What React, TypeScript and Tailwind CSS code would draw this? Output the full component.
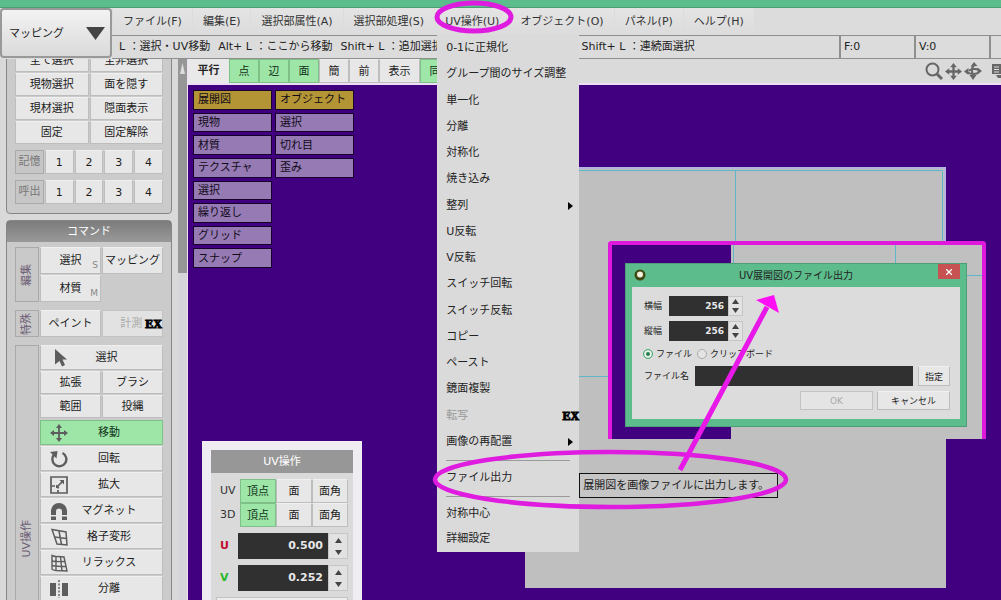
import { useState } from "react";
import type { ReactNode } from "react";

const BTN =
  "flex items-center justify-center border border-[#bdbdbd] border-t-[#f0f0f0] bg-[#e7e7e7] pt-px text-[#1c1c1c] whitespace-nowrap";
const BTN_ON =
  "flex items-center justify-center border border-[#7fbf88] bg-[#9de6a7] pt-px text-[#12331a] whitespace-nowrap";

const MENUS = [
  "ファイル(F)",
  "編集(E)",
  "選択部属性(A)",
  "選択部処理(S)",
  "UV操作(U)",
  "オブジェクト(O)",
  "パネル(P)",
  "ヘルプ(H)",
];

const UV_ITEMS = [
  { label: "0-1に正規化" },
  { label: "グループ間のサイズ調整" },
  { label: "単一化" },
  { label: "分離" },
  { label: "対称化" },
  { label: "焼き込み" },
  { label: "整列", sub: true },
  { label: "U反転" },
  { label: "V反転" },
  { label: "スイッチ回転" },
  { label: "スイッチ反転" },
  { label: "コピー" },
  { label: "ペースト" },
  { label: "鏡面複製" },
  { label: "転写", ex: true },
  { label: "画像の再配置", sub: true },
];

const OVERLAY = [
  "展開図", "現物", "材質", "テクスチャ", "選択", "繰り返し", "グリッド", "スナップ",
  "オブジェクト", "選択", "切れ目", "歪み",
];

function ExMark() {
  return (
    <span className="font-['Liberation_Serif',serif] text-[12px] font-black text-black [-webkit-text-stroke:1px_#000]">
      EX
    </span>
  );
}

function Arrows({ label }: { label: string }) {
  return (
    <div className="flex w-full flex-col border border-[#c6c6c6] bg-[#e2e2e2]">
      <button aria-label={`${label} +`} className="flex flex-1 items-center justify-center">
        <svg width="7" height="5" viewBox="0 0 7 5"><path d="M0 5L3.5 0L7 5z" fill="#444" /></svg>
      </button>
      <button aria-label={`${label} -`} className="flex flex-1 items-center justify-center">
        <svg width="7" height="5" viewBox="0 0 7 5"><path d="M0 0L3.5 5L7 0z" fill="#444" /></svg>
      </button>
    </div>
  );
}

function MenuItem({ item }: { item: { label: string; sub?: boolean; ex?: boolean } }) {
  return (
    <button
      role="menuitem"
      disabled={item.ex}
      className={`flex w-full items-center justify-between pl-[9px] text-left whitespace-nowrap ${item.ex ? "text-[#999]" : "text-[#222]"}`}
    >
      {item.label}
      {item.sub && (
        <svg width="5" height="8" viewBox="0 0 5 8" className="mr-[6px]"><path d="M0 0L5 4L0 8z" fill="#000" /></svg>
      )}
      {item.ex && <ExMark />}
    </button>
  );
}

function UvMenu() {
  return (
    <div role="menu" className="absolute top-[27px] left-[2px] z-20 w-[142px] bg-[#dadada]">
      <div className="grid h-[420px] auto-rows-fr">
        {UV_ITEMS.map((item) => (
          <MenuItem key={item.label} item={item} />
        ))}
      </div>
      <Separator />
      <div className="relative grid h-[26px]">
        <MenuItem item={{ label: "ファイル出力" }} />
        <div
          role="tooltip"
          className="absolute top-2 left-full flex h-[25px] w-[199px] items-center border border-[#111] bg-[#c6c6c6] pl-[3px] whitespace-nowrap text-[#222]"
        >
          展開図を画像ファイルに出力します。
        </div>
      </div>
      <Separator />
      <div className="grid h-[51px] auto-rows-fr">
        <MenuItem item={{ label: "対称中心" }} />
        <MenuItem item={{ label: "詳細設定" }} />
      </div>
    </div>
  );
}

function Separator() {
  return (
    <div className="flex h-[10px] items-center pr-[9px] pl-[9px]">
      <div className="h-px w-full bg-[#9a9a9a]" />
    </div>
  );
}

function Header() {
  return (
    <header className="relative z-20 flex h-[51px] shrink-0 bg-[#dcdcdc]">
      <div className="relative w-28 shrink-0">
        <select
          aria-label="モード"
          className="h-[50px] w-full appearance-none rounded-sm border-2 border-[#999] bg-linear-to-b from-[#f3f3f3] to-[#dadada] pt-px pl-[7px] text-[#222]"
        >
          <option>マッピング</option>
        </select>
        <svg width="19" height="13" viewBox="0 0 19 13" className="pointer-events-none absolute top-[19px] right-[7px]">
          <path d="M0 0H19L9.500 13z" fill="#444" />
        </svg>
      </div>
      <div className="flex min-w-0 flex-1 flex-col">
        <nav className="flex h-[27px] gap-px pl-px">
          {MENUS.map((m) => (
            <div key={m} className="relative">
              <button className="h-[26px] bg-linear-to-b from-[#e4e4e4] to-[#dcdcdc] px-[10px] pt-px whitespace-nowrap text-[#333]">
                {m}
              </button>
              {m === "UV操作(U)" && <UvMenu />}
            </div>
          ))}
        </nav>
        <div className="flex h-6 border-y border-[#8f8f8f] text-[#222]">
          <div className="flex min-w-0 flex-1 items-center gap-2 overflow-hidden pl-[7px] whitespace-pre">
            <span>L ：選択・UV移動</span>
            <span>Alt+ L ：ここから移動</span>
            <span className="w-[233px] shrink-0">Shift+ L ：追加選択</span>
            <span>Shift+ L ：連続面選択</span>
          </div>
          <div className="flex w-[75px] items-center border-l-2 border-[#8f8f8f] pl-[3px]">F:0</div>
          <div className="flex w-[75px] items-center border-l-2 border-[#8f8f8f] pl-[3px]">V:0</div>
          <div className="w-3 border-l-2 border-[#8f8f8f]" />
        </div>
      </div>
    </header>
  );
}

function SideLabel({ children }: { children: ReactNode }) {
  return (
    <div className="flex w-6 shrink-0 items-center justify-center border border-[#a9a9a9] bg-[#c9c9c9] text-[#6b5c74]">
      <span className="rotate-180 [text-orientation:sideways] [writing-mode:vertical-rl]">{children}</span>
    </div>
  );
}

const G = "#5d5d5d";

const TOOLS: { label: string; icon: ReactNode }[] = [
  {
    label: "移動",
    icon: (
      <g fill={G}>
        <path d="M8.100 3h1.800v12H8.100zM3 8.100h12v1.800H3z" />
        <path d="M9 0l3 4H6zM9 18l3-4H6zM0 9l4-3v6zM18 9l-4-3v6z" />
      </g>
    ),
  },
  {
    label: "回転",
    icon: (
      <g>
        <path d="M4.500 4.200A7 7 0 1 0 12.500 3" fill="none" stroke={G} strokeWidth="2.400" />
        <path d="M0 2L7.500 1L6.500 8.500z" fill={G} />
      </g>
    ),
  },
  {
    label: "拡大",
    icon: (
      <g fill="none" stroke={G} strokeWidth="1.700">
        <path d="M1 1h16v16H1z" />
        <path d="M1 10h4M7 10h1M8 10.500v2M8 14v3M8 10l5-5" />
        <path d="M9.500 4H14v4.500zM6 12V8.500l3.500 3.500z" fill={G} stroke="none" />
      </g>
    ),
  },
  {
    label: "マグネット",
    icon: (
      <g fill={G}>
        <path d="M1 13V9a8 8 0 0 1 16 0v4h-5V9.500a3 3 0 0 0-6 0V13z" />
        <path d="M1 14.500h5V18H1zM12 14.500h5V18h-5z" />
      </g>
    ),
  },
  {
    label: "格子変形",
    icon: (
      <g fill="none" stroke={G} strokeWidth="1.500">
        <path d="M2 1.500L16 4L17 17L7 16z" />
        <path d="M9 3L11.500 16.500M4.500 9L16.500 10.500" />
      </g>
    ),
  },
  {
    label: "リラックス",
    icon: (
      <g fill="none" stroke={G} strokeWidth="1.400">
        <path d="M2 1.500Q6 3 8 2.500L14 3L17 17L6 16.500Q2 16 2 15z" />
        <path d="M6 2.500V16.500M10.500 3L12 17M2 7Q6 8 15 7.500M2 11.500Q6 12.500 16 12.500" />
      </g>
    ),
  },
  {
    label: "分離",
    icon: (
      <g>
        <path d="M0 3h6v13H0zM12 3h6v13h-6z" fill={G} />
        <path d="M9 0v18" stroke={G} strokeWidth="1.400" strokeDasharray="2 1.500" />
      </g>
    ),
  },
];

function Sidebar() {
  return (
    <aside className="flex w-[188px] shrink-0 overflow-hidden border-r border-[#ecdff5] bg-[#d9d9d9] pl-[6px]">
      <div className="-mt-[15px] flex min-w-0 flex-1 flex-col gap-[6px]">
        <section className="flex flex-col gap-[6px] rounded-sm border border-[#868686] bg-[#cbcbcb] px-2 pt-[4px] pb-[9px]">
          <div className="grid auto-rows-[23px] grid-cols-2 gap-px">
            {["全て選択", "全非選択", "現物選択", "面を隠す", "現材選択", "隠面表示", "固定", "固定解除"].map((t) => (
              <button key={t} className={BTN}>{t}</button>
            ))}
          </div>
          {["記憶", "呼出"].map((t) => (
            <div key={t} className="grid h-6 grid-cols-5 gap-px">
              <div className="flex items-center justify-center border border-[#aaa] bg-[#c6c6c6] text-[#777]">{t}</div>
              {[1, 2, 3, 4].map((n) => (
                <button key={n} className={BTN}>{n}</button>
              ))}
            </div>
          ))}
        </section>

        <section className="rounded-sm border border-[#868686] bg-[#cbcbcb]">
          <h2 className="flex h-[21px] items-center justify-center bg-linear-to-b from-[#7c7c7c] to-[#999] text-white">コマンド</h2>
          <div className="flex flex-col gap-2 px-2 pt-[5px]">
            <div className="flex gap-px">
              <SideLabel>編集</SideLabel>
              <div className="grid flex-1 auto-rows-[27px] grid-cols-2 gap-px">
                <button className={`${BTN} relative`}>
                  選択<span className="absolute right-[2px] bottom-0 text-[9px] text-[#888]">S</span>
                </button>
                <button className={BTN}>マッピング</button>
                <button className={`${BTN} relative`}>
                  材質<span className="absolute right-[2px] bottom-0 text-[9px] text-[#888]">M</span>
                </button>
              </div>
            </div>
            <div className="flex gap-px">
              <SideLabel>特殊</SideLabel>
              <div className="grid flex-1 auto-rows-[27px] grid-cols-2 gap-px">
                <button className={BTN}>ペイント</button>
                <button disabled className="flex items-center justify-end gap-[3px] border border-[#c3c3c3] bg-[#e2e2e2] text-[#aaa]">
                  計測<ExMark />
                </button>
              </div>
            </div>
            <div className="flex h-[388px] gap-px">
              <SideLabel>UV操作</SideLabel>
              <div className="flex flex-1 flex-col gap-px">
                <button className={`${BTN} relative h-[25px] pl-[10px]`}>
                  <svg width="14" height="18" viewBox="0 0 14 18" className="absolute top-[3px] left-[13px]">
                    <path d="M1 0L13 10.500H8.500L11 16L8 17.500L5.500 12L1 15.500z" fill={G} />
                  </svg>
                  選択
                </button>
                <div className="grid auto-rows-[23px] grid-cols-2 gap-px">
                  {["拡張", "ブラシ", "範囲", "投縄"].map((t) => (
                    <button key={t} className={BTN}>{t}</button>
                  ))}
                </div>
                <div className="flex flex-col gap-px pt-px">
                  {TOOLS.map((t, i) => (
                    <button key={t.label} className={`${i === 0 ? BTN_ON : BTN} h-[25px] pr-3 pl-[9px]`}>
                      <svg width="18" height="18" viewBox="0 0 18 18">{t.icon}</svg>
                      <span className="flex-1 text-center">{t.label}</span>
                    </button>
                  ))}
                </div>
              </div>
            </div>
          </div>
        </section>
      </div>
      <div className="ml-[6px] w-[9px] bg-[#d6d6da]">
        <div className="flex h-[214px] justify-center bg-[#969696] pt-1">
          <svg width="5" height="11" viewBox="0 0 5 11"><path d="M2.500 0L5 11H0z" fill="#ddd" /></svg>
        </div>
      </div>
    </aside>
  );
}

function ViewToolbar() {
  const views = [
    { t: "点", on: true },
    { t: "辺", on: true },
    { t: "面", on: true },
    { t: "簡" },
    { t: "前" },
  ];
  return (
    <div className="flex h-[26px] shrink-0 border-b-2 border-[#ecdff5] bg-[#dadada]">
      <button className="w-[41px] bg-[#e9e9e9] font-bold text-[#222]">平行</button>
      {views.map((v) => (
        <button key={v.t} className={`${v.on ? BTN_ON : BTN} w-[30px]`}>{v.t}</button>
      ))}
      <button className={`${BTN} w-[41px]`}>表示</button>
      <button className={`${BTN_ON} w-[30px]`}>同</button>
      <div className="ml-auto flex items-center gap-[2px] overflow-hidden text-[#666]">
        <svg width="18" height="18" viewBox="0 0 18 18" fill="none" stroke="currentColor">
          <circle cx="7.500" cy="7.500" r="6" strokeWidth="2" />
          <path d="M12 12l5 5" strokeWidth="3" />
        </svg>
        <svg width="17" height="17" viewBox="0 0 18 18" fill="currentColor">
          <path d="M7.800 3h2.400v12H7.800zM3 7.800h12v2.400H3z" />
          <path d="M9 0l3.500 4.500h-7zM9 18l3.500-4.500h-7zM0 9l4.500-3.500v7zM18 9l-4.500-3.500v7z" />
        </svg>
        <svg width="18" height="18" viewBox="0 0 18 18" fill="none" stroke="currentColor" strokeWidth="2">
          <path d="M10 3Q6.500 7 9 13M15 8Q10 6 5 8.500M4 10.500Q8 13 14 11" />
          <path d="M6.500 4.500L10 0L13.500 4zM5.500 13L9 18L12.500 13zM0 9.500L4.500 6V13zM18 9L13.500 5.500V12.500z" fill="currentColor" stroke="none" />
        </svg>
        <svg width="9" height="14" viewBox="0 0 9 14" className="ml-2" fill="currentColor">
          <path d="M0 0h9v10H0zM4 11h5v3H6z" />
          <path d="M2 3h5M2 5.500h5M2 8h5" stroke="#ddd" />
        </svg>
      </div>
    </div>
  );
}

function UvPanel() {
  const [mode, setMode] = useState({ UV: "頂点", "3D": "頂点" });
  return (
    <section className="absolute top-[356px] left-[14px] w-[160px] border-9 border-[#efedf1] bg-[#dadada]">
      <h2 className="flex h-[23px] items-center justify-center bg-[#979797] text-white">UV操作</h2>
      <div className="flex flex-col px-[5px] pt-[6px]">
        {(["UV", "3D"] as const).map((row) => (
          <div key={row} className="flex h-6 items-center">
            <span className="w-6 pl-1 text-[#333]">{row}</span>
            <div className="grid h-full flex-1 grid-cols-3">
              {["頂点", "面", "面角"].map((t) => (
                <button
                  key={t}
                  aria-pressed={mode[row] === t}
                  onClick={() => setMode({ ...mode, [row]: t })}
                  className={mode[row] === t ? BTN_ON : BTN}
                >
                  {t}
                </button>
              ))}
            </div>
          </div>
        ))}
        <div className="flex flex-col gap-[6px] pt-[6px]">
          {[
            ["U", "0.500", "text-[#c01030]"],
            ["V", "0.252", "text-[#28b828]"],
          ].map(([name, value, color]) => (
            <div key={name} className="flex h-[26px] items-stretch">
              <label htmlFor={`uv-${name}`} className={`flex w-[22px] items-center pl-1 font-bold ${color}`}>{name}</label>
              <input
                id={`uv-${name}`}
                defaultValue={value}
                className="w-[90px] bg-[#303030] pr-[5px] text-right font-bold text-[#e8e8e8]"
              />
              <div className="flex flex-1"><Arrows label={name} /></div>
            </div>
          ))}
          <div className="h-6 border border-[#c3c3c3] bg-[#ececec]" />
        </div>
      </div>
    </section>
  );
}

function ExportDialog() {
  return (
    <div
      role="dialog"
      aria-label="UV展開図のファイル出力"
      className="absolute top-[18px] left-[13px] flex h-[164px] w-[342px] flex-col border border-[#4e9f77] bg-[#5cbc8b] px-[6px] pb-[7px] text-[9px] text-[#222]"
    >
      <div className="relative flex h-[23px] items-center justify-center text-[10px]">
        <svg width="12" height="12" viewBox="0 0 12 12" className="absolute top-[5px] left-[2px]">
          <circle cx="6" cy="6" r="5.500" fill="#3d4a10" />
          <circle cx="6" cy="5.500" r="3" fill="#f2f2e0" />
        </svg>
        UV展開図のファイル出力
        <button aria-label="閉じる" className="absolute top-0 right-0 flex h-[15px] w-[22px] items-center justify-center bg-[#c75252]">
          <svg width="6" height="6" viewBox="0 0 6 6" stroke="#fff" strokeWidth="1.300"><path d="M0 0L6 6M6 0L0 6" /></svg>
        </button>
      </div>
      <div className="flex flex-1 flex-col bg-[#dcdcdc] px-[10px] pt-[9px]">
        <div className="flex flex-col gap-[5px]">
          {["横幅", "縦幅"].map((t) => (
            <div key={t} className="flex h-5">
              <label htmlFor={t} className="flex w-[27px] items-center pl-[2px]">{t}</label>
              <input id={t} defaultValue="256" className="w-[59px] bg-[#303030] pr-1 text-right font-bold text-[#e8e8e8]" />
              <div className="flex w-[15px]"><Arrows label={t} /></div>
            </div>
          ))}
        </div>
        <div className="flex h-[25px] items-center gap-[5px] pl-px">
          <label className="flex items-center gap-[3px]">
            <input
              type="radio"
              name="dest"
              defaultChecked
              className="size-[10px] appearance-none rounded-full border border-[#4caf78] bg-[#eee] checked:bg-[#2a7d4d] checked:shadow-[inset_0_0_0_2px_#e8f2ec]"
            />
            ファイル
          </label>
          <label className="flex items-center gap-[3px]">
            <input type="radio" name="dest" className="size-[10px] appearance-none rounded-full border border-[#aaa] bg-[#e4e4e4]" />
            クリップボード
          </label>
        </div>
        <div className="flex h-5">
          <label htmlFor="fname" className="flex w-[53px] items-center pl-[2px]">ファイル名</label>
          <input id="fname" className="min-w-0 flex-1 bg-[#303030] px-1 text-[#e8e8e8]" />
          <button className={`${BTN} ml-[5px] w-8`}>指定</button>
        </div>
        <div className="flex justify-end gap-1 pt-[5px]">
          <button disabled className="h-[19px] w-[73px] border border-[#c3c3c3] bg-[#e4e4e4] text-[#aaa]">OK</button>
          <button className={`${BTN} h-[19px] w-[73px]`}>キャンセル</button>
        </div>
      </div>
    </div>
  );
}

function Viewport() {
  return (
    <main className="relative min-h-0 flex-1 overflow-hidden bg-[#400080]">
      {/* UV canvas with its quarter grid */}
      <div className="absolute top-[82px] left-[337px] size-[421px] bg-[#bfbfbf]">
        <svg className="size-full" fill="none">
          <path d="M0 1H420V272" stroke="#b4b4e0" strokeWidth="2" />
          <path d="M0 3.500H417.500V272M210.500 3V209.500H0" stroke="#5fb6c6" />
        </svg>
      </div>

      <div className="absolute top-[5px] left-[5px] grid h-[178px] auto-cols-[79px] grid-flow-col grid-rows-8 gap-[3px]">
        {OVERLAY.map((t, i) => (
          <button
            key={i}
            className={`border border-[#16002c] pt-px pl-1 text-left text-[#120a18] ${i % 8 === 0 ? "bg-[#b39535]" : "bg-[#957ab3]"}`}
          >
            {t}
          </button>
        ))}
      </div>

      <UvPanel />

      <div className="absolute top-[156px] left-[420px] h-[198px] w-[378px] rounded-t-sm border-4 border-b-0 border-[#e018dc] bg-[#c0c0c0]">
        <div className="h-full w-[119px] bg-[#400080]" />
        <svg className="absolute inset-0 size-full" stroke="#5fb6c6" fill="none">
          <path d="M121.500 0V20M283.500 0V20M355 30.500H370" />
        </svg>
        <ExportDialog />
      </div>
    </main>
  );
}

export default function App() {
  return (
    <div className="relative flex h-screen w-full flex-col overflow-hidden bg-[#dadada] font-['DejaVu_Sans','Noto_Sans_CJK_JP',sans-serif] text-[11px] leading-4">
      <div className="h-2 shrink-0 border-b border-[#4c9c76] bg-[#5bbd8c]" />
      <Header />
      <div className="flex min-h-0 flex-1">
        <Sidebar />
        <div className="flex min-w-0 flex-1 flex-col">
          <ViewToolbar />
          <Viewport />
        </div>
      </div>

      {/* marker strokes drawn over the whole window */}
      <svg
        width="1001"
        height="600"
        viewBox="0 0 1001 600"
        fill="none"
        stroke="#e01be0"
        className="pointer-events-none absolute top-0 left-0 z-30"
      >
        <ellipse cx="474" cy="17" rx="37" ry="14" strokeWidth="5" />
        <ellipse cx="610.500" cy="479.500" rx="175.500" ry="27.500" strokeWidth="4.500" />
        <path d="M680 470L767 307" stroke="#e818e8" strokeWidth="5" />
        <path d="M774 295L756 300L779 313z" fill="#ff10f4" stroke="none" />
      </svg>
    </div>
  );
}
